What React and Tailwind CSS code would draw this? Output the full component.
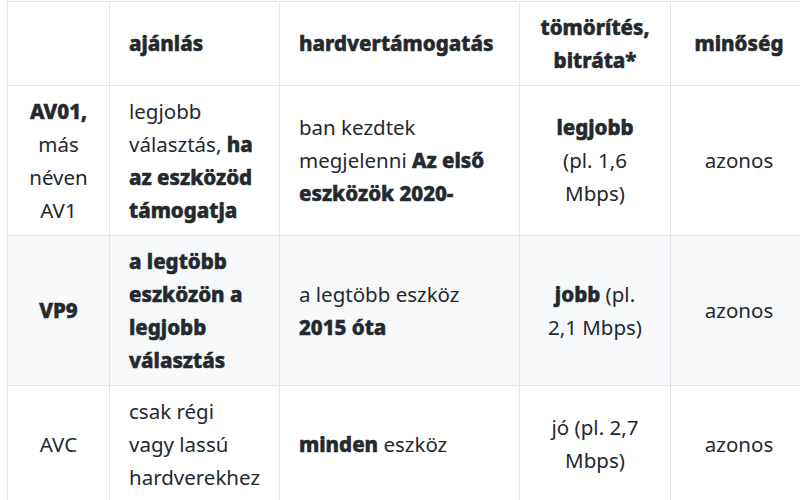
import React from "react";

const B = ({ children }) => (
  <strong className="font-extrabold [-webkit-text-stroke:0.5px_#24292e]">{children}</strong>
);

export default function App() {
  const td = "border border-[#e1e4e8] px-[19px] py-[8.5px] align-middle";
  const th = `${td} font-extrabold [-webkit-text-stroke:0.5px_#24292e]`;
  return (
    <div className="w-[800px] h-[500px] overflow-hidden bg-white">
      <table
        className="table-fixed border-collapse ml-[7px] mt-[1px] text-[#24292e] text-[20.5px] leading-[33px] w-[800px]"
        style={{ fontFamily: '"Noto Sans", "Open Sans", sans-serif' }}
      >
        <colgroup>
          <col className="w-[102px]" />
          <col className="w-[170px]" />
          <col className="w-[240px]" />
          <col className="w-[151px]" />
          <col className="w-[137px]" />
        </colgroup>
        <thead>
          <tr>
            <th className={td}></th>
            <th className={`${th} text-left`}>ajánlás</th>
            <th className={`${th} text-left`}>hardvertámogatás</th>
            <th className={`${th} text-center`}>tömörítés, bitráta*</th>
            <th className={`${th} text-center`}>minőség</th>
          </tr>
        </thead>
        <tbody>
          <tr>
            <td className={`${td} text-center px-[12px]`}>
              <B>AV01,</B> más néven AV1
            </td>
            <td className={`${td} text-left`}>
              legjobb választás, <B>ha az eszközöd támogatja</B>
            </td>
            <td className={`${td} text-left`}>
              ban kezdtek megjelenni <B>Az első eszközök 2020-</B>
            </td>
            <td className={`${td} text-center`}>
              <B>legjobb</B> (pl. 1,6 Mbps)
            </td>
            <td className={`${td} text-center`}>azonos</td>
          </tr>
          <tr className="bg-[#f6f8fa]">
            <td className={`${td} text-center px-[12px]`}>
              <B>VP9</B>
            </td>
            <td className={`${td} text-left`}>
              <B>a legtöbb eszközön a legjobb választás</B>
            </td>
            <td className={`${td} text-left`}>
              a legtöbb eszköz <B>2015 óta</B>
            </td>
            <td className={`${td} text-center`}>
              <B>jobb</B> (pl. 2,1 Mbps)
            </td>
            <td className={`${td} text-center`}>azonos</td>
          </tr>
          <tr>
            <td className={`${td} text-center px-[12px]`}>AVC</td>
            <td className={`${td} text-left`}>csak régi vagy lassú hardverekhez</td>
            <td className={`${td} text-left`}>
              <B>minden</B> eszköz
            </td>
            <td className={`${td} text-center`}>jó (pl. 2,7 Mbps)</td>
            <td className={`${td} text-center`}>azonos</td>
          </tr>
        </tbody>
      </table>
    </div>
  );
}
